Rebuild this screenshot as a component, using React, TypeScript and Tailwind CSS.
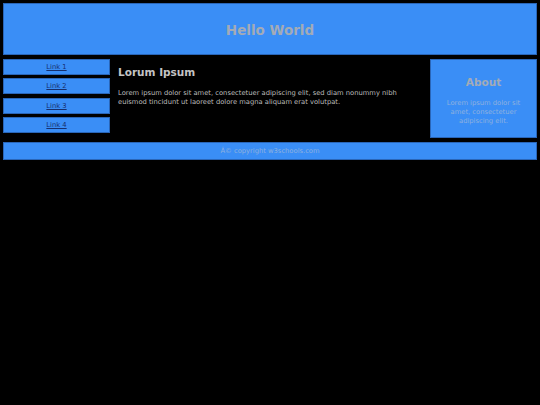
import React from 'react';

const links = ['Link 1', 'Link 2', 'Link 3', 'Link 4'];

export default function App() {
  return (
    <div
      className="min-h-screen w-full bg-black p-[3px] text-[#bdbdbd]"
      style={{ fontFamily: '"DejaVu Sans", Verdana, sans-serif' }}
    >
      {/* top banner */}
      <header className="flex h-[52px] items-center justify-center border border-[#2a66b8] bg-[#3a8ef6] pt-[2px]">
        <h1 className="text-[13.5px] font-bold text-[#a3abb6]">Hello World</h1>
      </header>

      <div className="mt-[4px] flex h-[79px]">
        {/* side menu */}
        <nav className="flex w-[107px] flex-col gap-[3.4px]">
          {links.map((l) => (
            <a
              key={l}
              href="#"
              className="flex h-[16px] items-center justify-center border border-[#2a66b8] bg-[#3a8ef6] text-[6.75px] text-[#17306e] underline"
            >
              {l}
            </a>
          ))}
        </nav>

        {/* article */}
        <main className="flex-1 px-[8px] pt-[6px]">
          <h2 className="text-[10.5px] font-bold leading-[14px] text-[#c4c4c4]">Lorum Ipsum</h2>
          <p className="mt-[10px] text-[6.75px] leading-[9px] text-[#bdbdbd]">
            Lorem ipsum dolor sit amet, consectetuer adipiscing elit, sed diam nonummy nibh euismod tincidunt ut
            laoreet dolore magna aliquam erat volutpat.
          </p>
        </main>

        {/* sidebar */}
        <aside className="flex w-[107px] flex-col items-center border border-[#2a66b8] bg-[#3a8ef6] px-[10px] pt-[15px] text-center">
          <h3 className="text-[10.5px] font-bold leading-[14px] text-[#a3abb6]">About</h3>
          <p className="mt-[10px] text-[6.75px] leading-[9px] text-[#8fb1de]">
            Lorem ipsum dolor sit amet, consectetuer adipiscing elit.
          </p>
        </aside>
      </div>

      <footer className="mt-[4px] flex h-[18px] items-center justify-center border border-[#2a66b8] bg-[#3a8ef6] text-[6.75px] text-[#8fb1de]">
        Â© copyright w3schools.com
      </footer>
    </div>
  );
}
